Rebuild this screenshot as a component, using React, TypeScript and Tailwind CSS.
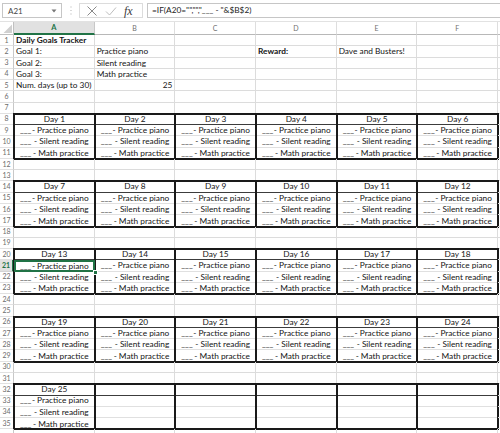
import React from "react";

function RowHead({ n, active = false }: { n?: number; active?: boolean }) {
  return (
    <div
      className={
        active
          ? "h-[11.27px] w-[14px] shrink-0 flex items-center justify-center text-[7px] leading-none font-bold text-[#217346] bg-[#e1e1e1] border-b border-b-[#d4d4d4] border-r-2 border-r-[#217346]"
          : "h-[11.27px] w-[14px] shrink-0 flex items-center justify-center text-[7px] leading-none text-[#6c6c6c] bg-white border-b border-b-[#e1e1e1] border-r border-r-[#c8c8c8]"
      }
    >
      {n}
    </div>
  );
}

function Cell({
  children,
  bold = false,
  right = false,
}: {
  children?: React.ReactNode;
  bold?: boolean;
  right?: boolean;
}) {
  return (
    <div
      className={`h-[11.27px] w-[80.67px] shrink-0 border-r border-b border-[#dcdcdc] flex items-center px-[2px] whitespace-nowrap ${
        right ? "justify-end" : "justify-start"
      } ${bold ? "font-bold" : "font-normal"}`}
    >
      {children}
    </div>
  );
}

function Tail() {
  return <div className="h-[11.27px] flex-1 border-b border-[#dcdcdc]" />;
}

type CellDef = { t?: string; bold?: boolean; right?: boolean };

function PlainRow({ n, cells = [] }: { n?: number; cells?: CellDef[] }) {
  const all: CellDef[] = Array.from({ length: 6 }, (_, i) => cells[i] || {});
  return (
    <div className="flex">
      <RowHead n={n} />
      {all.map((c, i) => (
        <Cell key={i} bold={c.bold} right={c.right}>
          {c.t}
        </Cell>
      ))}
      <Tail />
    </div>
  );
}

const ITEMS = ["- Practice piano", "- Silent reading", "- Math practice"];

function Block({ day, selected = false }: { day: number | null; selected?: boolean }) {
  return (
    <div className="w-[80.67px] shrink-0 flex flex-col shadow-[inset_0_0_0_1px_#1a1a1a,0_0_0_1px_#1a1a1a]">
      <div className="h-[11.27px] mx-px border-b border-[#3c3c3c] flex items-center justify-center whitespace-nowrap">
        {day !== null ? `Day ${day}` : ""}
      </div>
      {ITEMS.map((t, i) => {
        const sel = selected && i === 0;
        const cls = sel
          ? "relative h-[11.27px] flex items-center justify-between pl-[6px] pr-[6px] whitespace-nowrap shadow-[inset_0_0_0_2px_#217346]"
          : i < 2
          ? "h-[11.27px] mx-px flex items-center justify-between pl-[5px] pr-[5px] whitespace-nowrap border-b border-[#e0e0e0]"
          : "h-[11.27px] mx-px flex items-center justify-between pl-[5px] pr-[5px] whitespace-nowrap";
        return (
          <div key={i} className={cls}>
            {day !== null && (
              <>
                <span>___</span>
                <span>{t}</span>
              </>
            )}
            {sel && (
              <span className="absolute right-[-3px] bottom-[-3px] w-[5px] h-[5px] bg-[#217346] border border-white z-10" />
            )}
          </div>
        );
      })}
    </div>
  );
}

function Band({
  start,
  days,
  selected = false,
}: {
  start: number;
  days: (number | null)[];
  selected?: boolean;
}) {
  return (
    <div className="flex">
      <div className="flex flex-col">
        {[0, 1, 2, 3].map((i) => (
          <RowHead key={i} n={start + i} active={selected && i === 1} />
        ))}
      </div>
      {days.map((d, ci) => (
        <Block key={ci} day={d} selected={selected && ci === 0} />
      ))}
      <div className="flex flex-col flex-1">
        {[0, 1, 2, 3].map((i) => (
          <div key={i} className="h-[11.27px] border-b border-[#dcdcdc]" />
        ))}
      </div>
    </div>
  );
}

function FormulaBar() {
  return (
    <div className="h-[22px] flex items-center bg-white border-b border-[#e2e2e2]">
      <div className="ml-[2px] w-[60px] h-[15px] shrink-0 border border-[#c6c6c6] flex items-center justify-between pl-[5px] pr-[4px] text-[8px] text-[#444]">
        <span>A21</span>
        <svg width="6" height="4" viewBox="0 0 6 4">
          <polygon points="0.5,0.5 5.5,0.5 3,3.5" fill="#777" />
        </svg>
      </div>
      <div className="w-[17px] shrink-0 flex justify-center">
        <svg width="2" height="9" viewBox="0 0 2 9">
          <rect x="0.5" y="0.5" width="1" height="1" fill="#b0b0b0" />
          <rect x="0.5" y="4" width="1" height="1" fill="#b0b0b0" />
          <rect x="0.5" y="7.5" width="1" height="1" fill="#b0b0b0" />
        </svg>
      </div>
      <div className="w-[64px] h-[15px] shrink-0 border border-[#dcdcdc] flex items-center">
        <svg width="12" height="12" viewBox="0 0 12 12" className="ml-[6px]">
          <path d="M1.5 1.5 L10.5 10.5 M10.5 1.5 L1.5 10.5" stroke="#8a8a8a" strokeWidth="1" fill="none" />
        </svg>
        <svg width="12" height="12" viewBox="0 0 12 12" className="ml-[7px]">
          <path d="M1 6.5 L4.5 10 L11 2.5" stroke="#bdbdbd" strokeWidth="1" fill="none" />
        </svg>
        <span className="ml-[7px] font-['Liberation_Serif',serif] italic text-[12px] leading-none text-[#3a3a3a]">
          fx
        </span>
      </div>
      <div className="ml-[4px] flex-1 h-[15px] border border-r-0 border-[#c6c6c6] flex items-center pl-[4px] text-[8.3px] text-[#222] whitespace-nowrap overflow-hidden">
        =IF(A20="","","___ - "&amp;$B$2)
      </div>
    </div>
  );
}

function ColHeader() {
  const letters = ["A", "B", "C", "D", "E", "F"];
  return (
    <div className="flex h-[13px] bg-white">
      <div className="w-[14px] shrink-0 border-r border-b border-[#c0c0c0] flex items-end justify-end">
        <svg width="12" height="11" viewBox="0 0 12 11">
          <polygon points="11,1.5 11,10 2.5,10" fill="#d0d0d0" />
        </svg>
      </div>
      {letters.map((l) =>
        l === "A" ? (
          <div
            key={l}
            className="w-[80.67px] shrink-0 bg-[#e1e1e1] border-r border-r-[#c8c8c8] border-b-2 border-b-[#217346] flex items-center justify-center text-[7.5px] font-bold text-[#217346] leading-none"
          >
            {l}
          </div>
        ) : (
          <div
            key={l}
            className="w-[80.67px] shrink-0 border-r border-r-[#dedede] border-b border-b-[#b8b8b8] flex items-center justify-center text-[7px] text-[#707070] leading-none"
          >
            {l}
          </div>
        )
      )}
      <div className="flex-1 border-b border-[#b8b8b8]" />
    </div>
  );
}

export default function App() {
  return (
    <div className="w-[500px] h-[433px] overflow-hidden bg-white font-['Lato','Liberation_Sans',sans-serif] text-[8.3px] text-[#141414] leading-none">
      <FormulaBar />
      <ColHeader />
      <div className="flex flex-col">
        <PlainRow n={1} cells={[{ t: "Daily Goals Tracker", bold: true }]} />
        <PlainRow
          n={2}
          cells={[
            { t: "Goal 1:" },
            { t: "Practice piano" },
            {},
            { t: "Reward:", bold: true },
            { t: "Dave and Busters!" },
          ]}
        />
        <PlainRow n={3} cells={[{ t: "Goal 2:" }, { t: "Silent reading" }]} />
        <PlainRow n={4} cells={[{ t: "Goal 3:" }, { t: "Math practice" }]} />
        <PlainRow n={5} cells={[{ t: "Num. days (up to 30)" }, { t: "25", right: true }]} />
        <PlainRow n={6} />
        <PlainRow n={7} />
        <Band start={8} days={[1, 2, 3, 4, 5, 6]} />
        <PlainRow n={12} />
        <PlainRow n={13} />
        <Band start={14} days={[7, 8, 9, 10, 11, 12]} />
        <PlainRow n={18} />
        <PlainRow n={19} />
        <Band start={20} days={[13, 14, 15, 16, 17, 18]} selected />
        <PlainRow n={24} />
        <PlainRow n={25} />
        <Band start={26} days={[19, 20, 21, 22, 23, 24]} />
        <PlainRow n={30} />
        <PlainRow n={31} />
        <Band start={32} days={[25, null, null, null, null, null]} />
        <PlainRow />
      </div>
    </div>
  );
}
